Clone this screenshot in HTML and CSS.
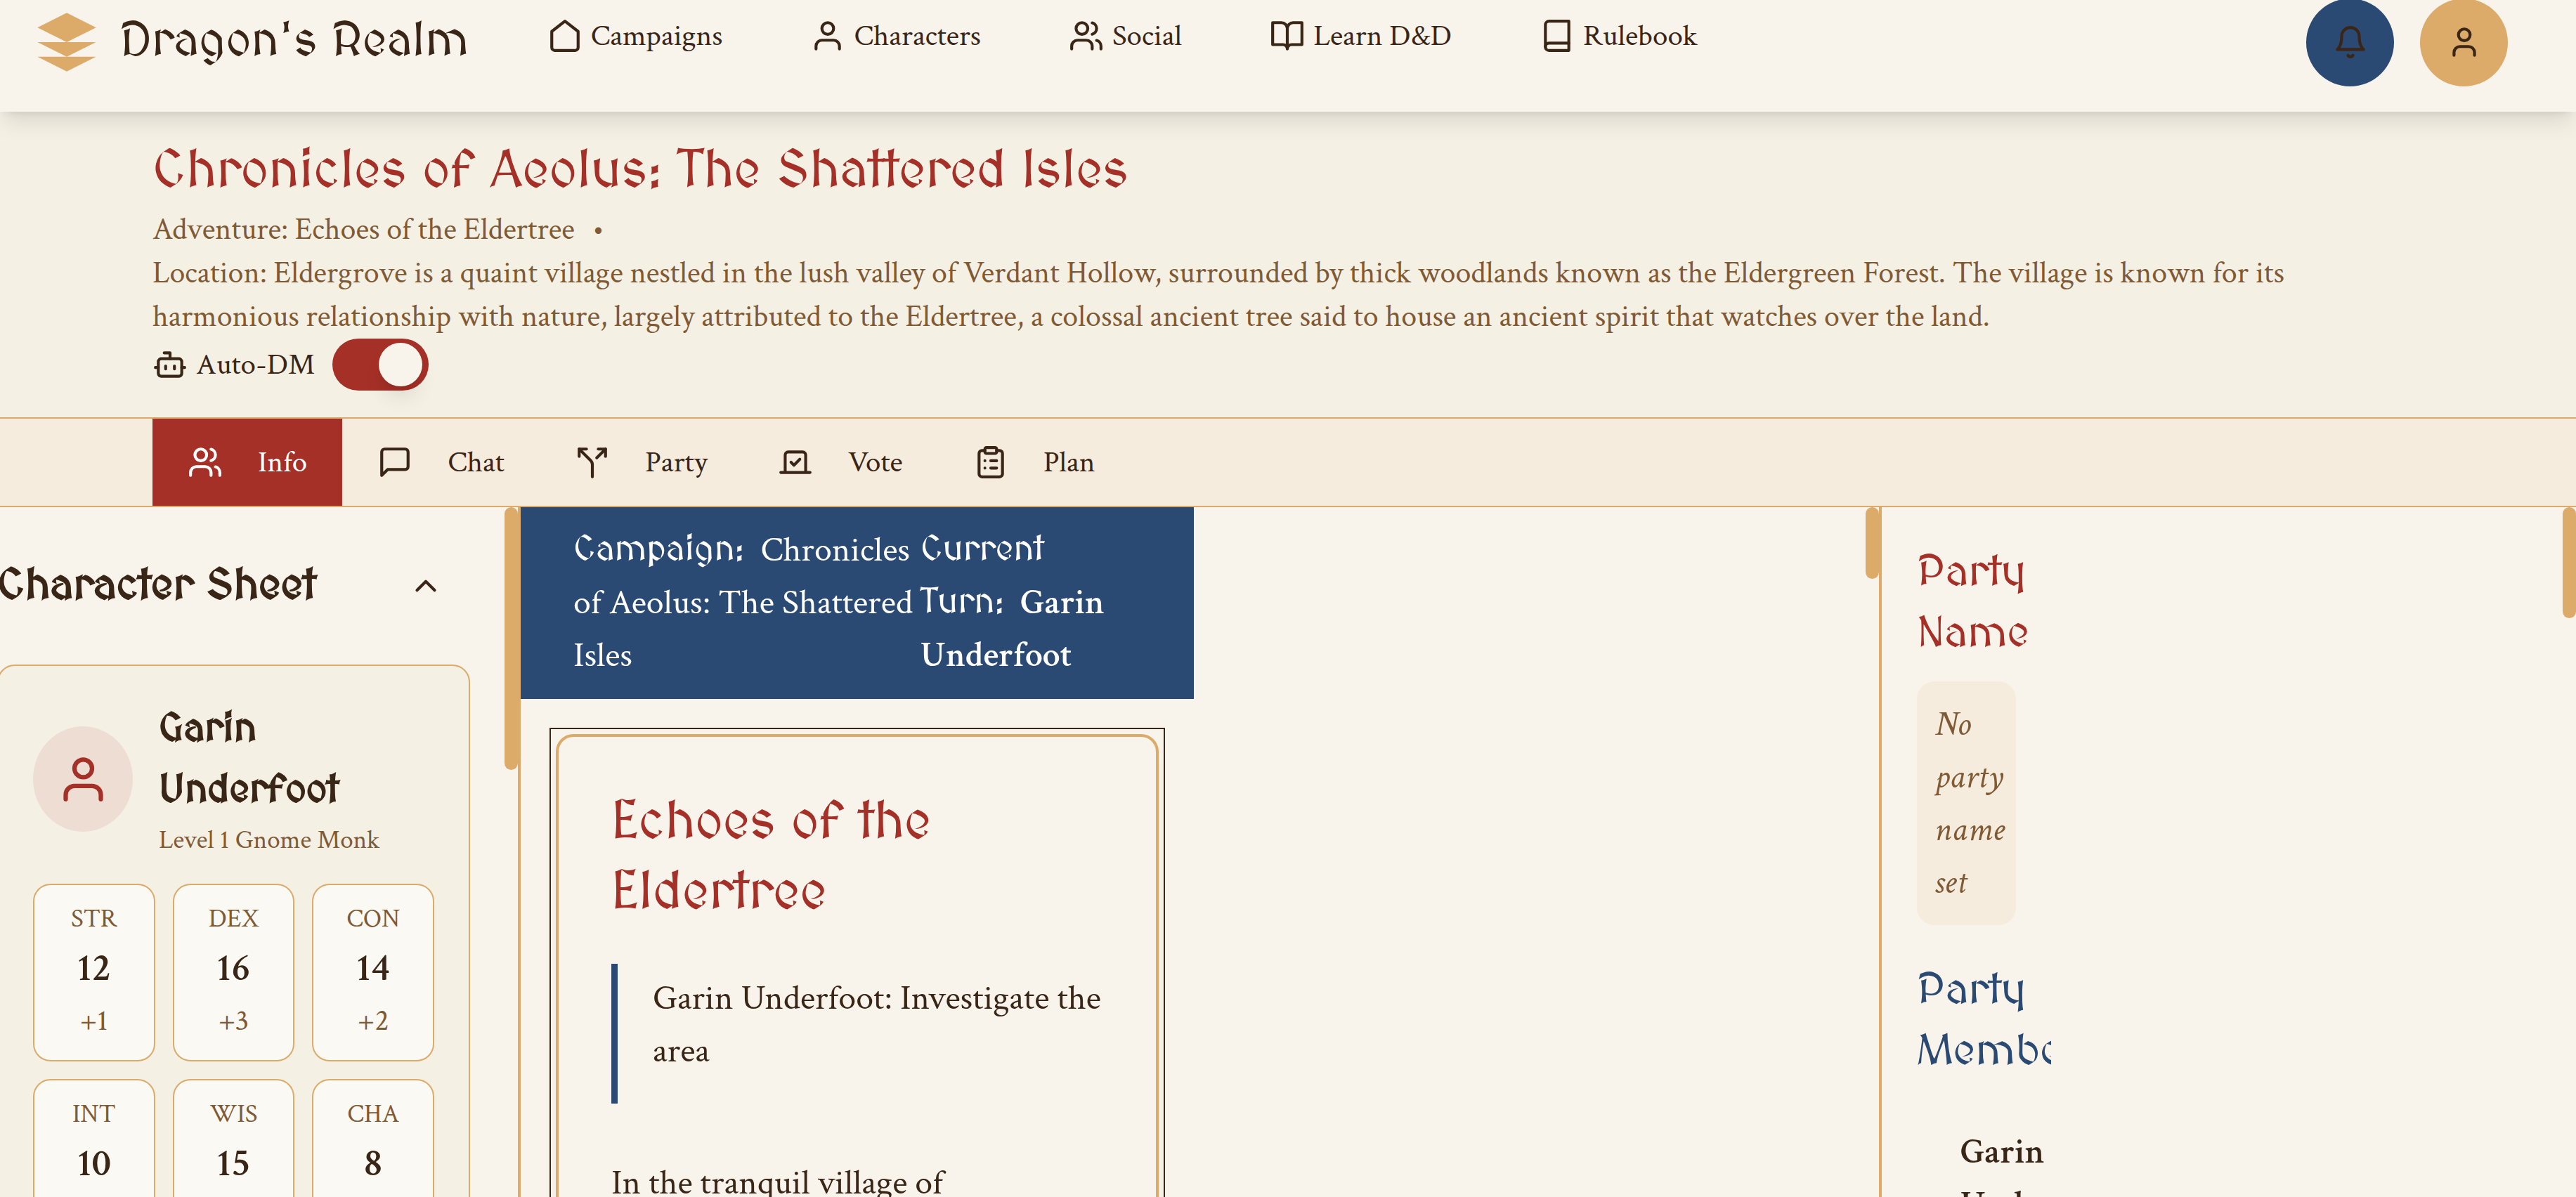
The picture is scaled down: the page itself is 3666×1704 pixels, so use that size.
FILE: index.html
```html
<!DOCTYPE html>
<html lang="en">
<head>
<meta charset="utf-8">
<meta name="viewport" content="width=device-width, initial-scale=1">
<title>Dragon's Realm</title>
<link rel="stylesheet" href="styles.css">
</head>
<body class="app">
<header class="topbar">
  <a class="brand" href="#">
    <svg class="brand-mark" viewBox="0 0 24 24" aria-hidden="true"><path d="M12 2L2 7l10 5 10-5zM2 12l10 5 10-5zM2 17l10 5 10-5z"/></svg>
    <span class="brand-name">Dragon's Realm</span>
  </a>
  <nav class="menu" aria-label="Main">
    <a class="menu-link" href="#"><svg class="icon" viewBox="0 0 24 24" aria-hidden="true"><path d="m3 9 9-7 9 7v11a2 2 0 0 1-2 2H5a2 2 0 0 1-2-2z"/></svg>Campaigns</a>
    <a class="menu-link" href="#"><svg class="icon" viewBox="0 0 24 24" aria-hidden="true"><path d="M20 21v-2a4 4 0 0 0-4-4H8a4 4 0 0 0-4 4v2"/><circle cx="12" cy="7" r="4"/></svg>Characters</a>
    <a class="menu-link" href="#"><svg class="icon" viewBox="0 0 24 24" aria-hidden="true"><path d="M16 21v-2a4 4 0 0 0-4-4H6a4 4 0 0 0-4 4v2"/><circle cx="9" cy="7" r="4"/><path d="M22 21v-2a4 4 0 0 0-3-3.87M16 3.13a4 4 0 0 1 0 7.75"/></svg>Social</a>
    <a class="menu-link" href="#"><svg class="icon" viewBox="0 0 24 24" aria-hidden="true"><path d="M2 3h6a4 4 0 0 1 4 4v14a3 3 0 0 0-3-3H2zM22 3h-6a4 4 0 0 0-4 4v14a3 3 0 0 1 3-3h7z"/></svg>Learn D&amp;D</a>
    <a class="menu-link" href="#"><svg class="icon" viewBox="0 0 24 24" aria-hidden="true"><path d="M4 19.5A2.5 2.5 0 0 1 6.5 17H20"/><path d="M6.5 2H20v20H6.5A2.5 2.5 0 0 1 4 19.5v-15A2.5 2.5 0 0 1 6.5 2z"/></svg>Rulebook</a>
  </nav>
  <div class="actions">
    <button class="round round-blue" type="button" aria-label="Notifications"><svg class="icon" viewBox="0 0 24 24" aria-hidden="true"><path d="M6 8a6 6 0 0 1 12 0c0 7 3 9 3 9H3s3-2 3-9"/><path d="M10.3 21a1.94 1.94 0 0 0 3.4 0"/></svg></button>
    <button class="round round-gold" type="button" aria-label="Account"><svg class="icon" viewBox="0 0 24 24" aria-hidden="true"><path d="M19 21v-2a4 4 0 0 0-4-4H9a4 4 0 0 0-4 4v2"/><circle cx="12" cy="7" r="4"/></svg></button>
  </div>
</header>

<section class="campaign">
  <h1 class="campaign-title">Chronicles of Aeolus: The Shattered Isles</h1>
  <p class="campaign-line">Adventure: Echoes of the Eldertree<span class="dot">•</span></p>
  <p class="campaign-line">Location: Eldergrove is a quaint village nestled in the lush valley of Verdant Hollow, surrounded by thick woodlands known as the Eldergreen Forest. The village is known for its harmonious relationship with nature, largely attributed to the Eldertree, a colossal ancient tree said to house an ancient spirit that watches over the land.</p>
  <div class="auto">
    <label class="auto-label" for="auto-dm"><svg class="icon" viewBox="0 0 24 24" aria-hidden="true"><path d="M12 8V4H8"/><rect width="16" height="12" x="4" y="8" rx="2"/><path d="M2 14h2M20 14h2M15 13v2M9 13v2"/></svg>Auto-DM</label>
    <input class="switch" id="auto-dm" type="checkbox" role="switch" checked>
  </div>
</section>

<nav class="tabs" aria-label="Campaign sections">
  <button class="tab tab-active" type="button"><svg class="icon" viewBox="0 0 24 24" aria-hidden="true"><path d="M16 21v-2a4 4 0 0 0-4-4H6a4 4 0 0 0-4 4v2"/><circle cx="9" cy="7" r="4"/><path d="M22 21v-2a4 4 0 0 0-3-3.87M16 3.13a4 4 0 0 1 0 7.75"/></svg>Info</button>
  <button class="tab" type="button"><svg class="icon" viewBox="0 0 24 24" aria-hidden="true"><path d="M21 15a2 2 0 0 1-2 2H7l-4 4V5a2 2 0 0 1 2-2h14a2 2 0 0 1 2 2z"/></svg>Chat</button>
  <button class="tab" type="button"><svg class="icon" viewBox="0 0 24 24" aria-hidden="true"><path d="M16 3h5v5M8 3H3v5"/><path d="M12 22v-8.300a4 4 0 0 0-1.172-2.872L3 3M15 9l6-6"/></svg>Party</button>
  <button class="tab" type="button"><svg class="icon" viewBox="0 0 24 24" aria-hidden="true"><path d="m9 12 2 2 4-4"/><path d="M5 7c0-1.100.9-2 2-2h10a2 2 0 0 1 2 2v12H5zM22 19H2"/></svg>Vote</button>
  <button class="tab" type="button"><svg class="icon" viewBox="0 0 24 24" aria-hidden="true"><rect width="8" height="4" x="8" y="2" rx="1"/><path d="M16 4h2a2 2 0 0 1 2 2v14a2 2 0 0 1-2 2H6a2 2 0 0 1-2-2V6a2 2 0 0 1 2-2h2M12 11h4M12 16h4M8 11h.01M8 16h.01"/></svg>Plan</button>
</nav>

<main class="board">
  <section class="panel sheet">
    <div class="sheet-head">
      <h2 class="sheet-title">Character Sheet</h2>
      <button class="toggle" type="button" aria-label="Collapse"><svg class="icon" viewBox="0 0 24 24" aria-hidden="true"><path d="m18 15-6-6-6 6"/></svg></button>
    </div>
    <article class="hero">
      <div class="hero-top">
        <div class="avatar"><svg class="icon icon-big" viewBox="0 0 24 24" aria-hidden="true"><path d="M20 21v-2a4 4 0 0 0-4-4H8a4 4 0 0 0-4 4v2"/><circle cx="12" cy="7" r="4"/></svg></div>
        <div class="hero-text">
          <h3 class="hero-name">Garin Underfoot</h3>
          <p class="hero-level">Level 1 Gnome Monk</p>
        </div>
      </div>
      <ul class="stats">
        <li class="stat"><span class="stat-name">STR</span><strong class="stat-value">12</strong><span class="stat-mod">+1</span></li>
        <li class="stat"><span class="stat-name">DEX</span><strong class="stat-value">16</strong><span class="stat-mod">+3</span></li>
        <li class="stat"><span class="stat-name">CON</span><strong class="stat-value">14</strong><span class="stat-mod">+2</span></li>
        <li class="stat"><span class="stat-name">INT</span><strong class="stat-value">10</strong></li>
        <li class="stat"><span class="stat-name">WIS</span><strong class="stat-value">15</strong></li>
        <li class="stat"><span class="stat-name">CHA</span><strong class="stat-value">8</strong></li>
      </ul>
    </article>
    <span class="thumb thumb-long"></span>
  </section>

  <section class="panel log">
    <div class="log-body">
      <div class="turn">
        <p class="turn-item"><span class="turn-label">Campaign:</span> Chronicles of Aeolus: The Shattered Isles</p>
        <p class="turn-item"><span class="turn-label">Current Turn:</span> <strong class="turn-name">Garin Underfoot</strong></p>
      </div>
      <article class="story">
        <h2 class="story-title">Echoes of the Eldertree</h2>
        <blockquote class="quote">Garin Underfoot: Investigate the area</blockquote>
        <p class="story-text">In the tranquil village of</p>
      </article>
    </div>
    <span class="thumb thumb-short"></span>
  </section>

  <aside class="panel party">
    <div class="party-body">
      <h2 class="party-title">Party Name</h2>
      <p class="party-empty">No party name set</p>
      <h2 class="party-title party-title-blue">Party Members</h2>
      <p class="member">Garin Underfoot</p>
    </div>
    <span class="thumb thumb-mid"></span>
  </aside>
</main>
</body>
</html>
```
FILE: styles.css
```css
:root {
  --cream: #f8f3eb;
  --parchment: #f5f0e4;
  --sand: #f5ecdd;
  --ink: #3a2617;
  --brown: #7f5a35;
  --red: #a53027;
  --gold: #dcaa69;
  --blue: #2a4a74;
  --display: "MedievalSharp", Lato, sans-serif;
  --text: "Crimson Text", "Liberation Serif", serif;
}

* { box-sizing: border-box; margin: 0; padding: 0; }

.app {
  display: flex;
  flex-direction: column;
  height: 100vh;
  overflow: hidden;
  background: var(--cream);
  color: var(--ink);
  font: 43px/62px var(--text);
}

button { font: inherit; color: inherit; border: 0; background: none; cursor: pointer; }
a { color: inherit; text-decoration: none; }

.icon {
  flex: none;
  width: 50px;
  height: 50px;
  fill: none;
  stroke: currentColor;
  stroke-width: 2;
  stroke-linecap: round;
  stroke-linejoin: round;
}
.icon-big { width: 75px; height: 75px; }

/* Top bar */
.topbar {
  position: relative;
  z-index: 1;
  flex: none;
  display: flex;
  align-items: center;
  height: 159px;
  padding: 0 97px 39px 45px;
  background: var(--cream);
  box-shadow: 0 20px 30px -6px rgba(0, 0, 0, .1), 0 8px 12px -8px rgba(0, 0, 0, .1);
}
.brand { display: flex; align-items: center; gap: 25px; margin-right: 112px; }
.brand-mark { width: 100px; height: 100px; fill: var(--gold); }
.brand-name { font: 68px/86px var(--display); }
.menu { display: flex; gap: 125px; margin-bottom: 18px; }
.menu-link { display: flex; align-items: center; gap: 12px; white-space: nowrap; }
.actions { display: flex; gap: 37px; margin-left: auto; }
.round { display: grid; place-items: center; width: 125px; height: 125px; border-radius: 50%; }
.round-blue { background: var(--blue); }
.round-gold { background: var(--gold); }

/* Campaign heading */
.campaign { flex: none; padding: 39px 300px 38px 217px; background: var(--parchment); color: var(--brown); }
.campaign-title { margin-bottom: 4px; font: 75px/94px var(--display); color: var(--red); }
.campaign-line { font-size: 44px; }
.dot { margin-left: 25px; }
.auto { display: flex; align-items: center; gap: 25px; color: var(--ink); }
.auto-label { display: flex; align-items: center; gap: 12px; }
.switch {
  appearance: none;
  display: flex;
  justify-content: flex-end;
  width: 137px;
  height: 74px;
  padding: 6px 9px;
  border-radius: 37px;
  background: var(--red);
}
.switch::before {
  content: "";
  width: 62px;
  height: 62px;
  border-radius: 50%;
  background: var(--cream);
  box-shadow: 0 20px 30px -6px rgba(0, 0, 0, .1), 0 8px 12px -8px rgba(0, 0, 0, .1);
}

/* Tabs */
.tabs {
  flex: none;
  display: flex;
  padding-left: 217px;
  border-top: 2px solid var(--gold);
  border-bottom: 2px solid var(--gold);
  background: var(--sand);
}
.tab { display: flex; align-items: center; gap: 50px; height: 124px; padding: 0 50px; }
.tab-active { background: var(--red); color: #fff; }

/* Columns */
.board { flex: 1; display: grid; grid-template-columns: 741fr 1933fr 992fr; min-height: 0; }
.panel { position: relative; min-width: 0; overflow: hidden; }
.thumb { position: absolute; top: 0; right: 0; width: 19px; border-radius: 10px; background: var(--gold); }
.thumb-long { height: 374px; }
.thumb-short { height: 102px; }
.thumb-mid { height: 158px; }

/* Character sheet */
.sheet { padding-right: 68px; border-right: 4px solid var(--gold); }
.sheet-head { display: flex; align-items: center; justify-content: space-between; height: 224px; margin-left: -4px; padding-right: 38px; }
.sheet-title { font: bold 62px/80px var(--display); -webkit-text-stroke: 2px currentColor; }
.toggle { display: flex; }
.hero { margin-left: -4px; padding: 47px 49px 50px; border: 2px solid var(--gold); border-radius: 25px; background: var(--parchment); }
.hero-top { display: flex; align-items: center; gap: 37px; margin-bottom: 35px; }
.avatar { flex: none; display: grid; place-items: center; width: 142px; height: 150px; border-radius: 50%; background: #eeddd3; color: var(--red); }
.hero-name { font: bold 56px/87px var(--display); -webkit-text-stroke: 2px currentColor; }
.hero-level { font-size: 37px; line-height: 54px; color: var(--brown); }
.hero-text { min-width: 0; }
.stats { display: grid; grid-template-columns: repeat(3, 1fr); gap: 25px; list-style: none; }
.stat {
  display: flex;
  flex-direction: column;
  min-height: 253px;
  padding: 20px 0 25px;
  border: 2px solid var(--gold);
  border-radius: 25px;
  background: #fbf9f4;
  text-align: center;
  color: var(--brown);
}
.stat-name { font-size: 37px; line-height: 56px; }
.stat-value { font-size: 56px; font-weight: 600; line-height: 86px; color: var(--ink); }
.stat-mod { line-height: 62px; }

/* Adventure log */
.log { font-size: 50px; line-height: 75px; }
.log-body { width: 958px; }
.turn { display: grid; grid-template-columns: 494fr 314fr; padding: 24px 75px; background: var(--blue); color: #fff; }
.turn-label { margin-right: 12px; font-family: var(--display); }
.turn-name { font-weight: 600; }
.story {
  position: relative;
  margin: 50px;
  padding: 73px 75px 900px;
  border: 4px solid var(--gold);
  border-radius: 25px;
  box-shadow: 0 20px 30px -6px rgba(0, 0, 0, .05);
}
.story::before { content: ""; position: absolute; inset: -13px; border: 2px solid var(--ink); }
.story-title { margin-bottom: 50px; font: 75px/100px var(--display); color: var(--red); }
.quote { margin-bottom: 76px; padding: 12px 0 37px 50px; border-left: 9px solid var(--blue); }

/* Party */
.party { border-left: 4px solid var(--gold); font-size: 50px; line-height: 75px; }
.party-body { width: 241px; padding: 50px; overflow: hidden; }
.party-title { margin-bottom: 24px; font: 62px/87px var(--display); color: var(--red); }
.party-title-blue { margin: 50px 0 62px; color: var(--blue); }
.party-empty { padding: 24px 25px 23px; border-radius: 25px; background: var(--sand); color: var(--brown); font-style: italic; }
.member { padding-left: 62px; font-weight: 600; }
```
